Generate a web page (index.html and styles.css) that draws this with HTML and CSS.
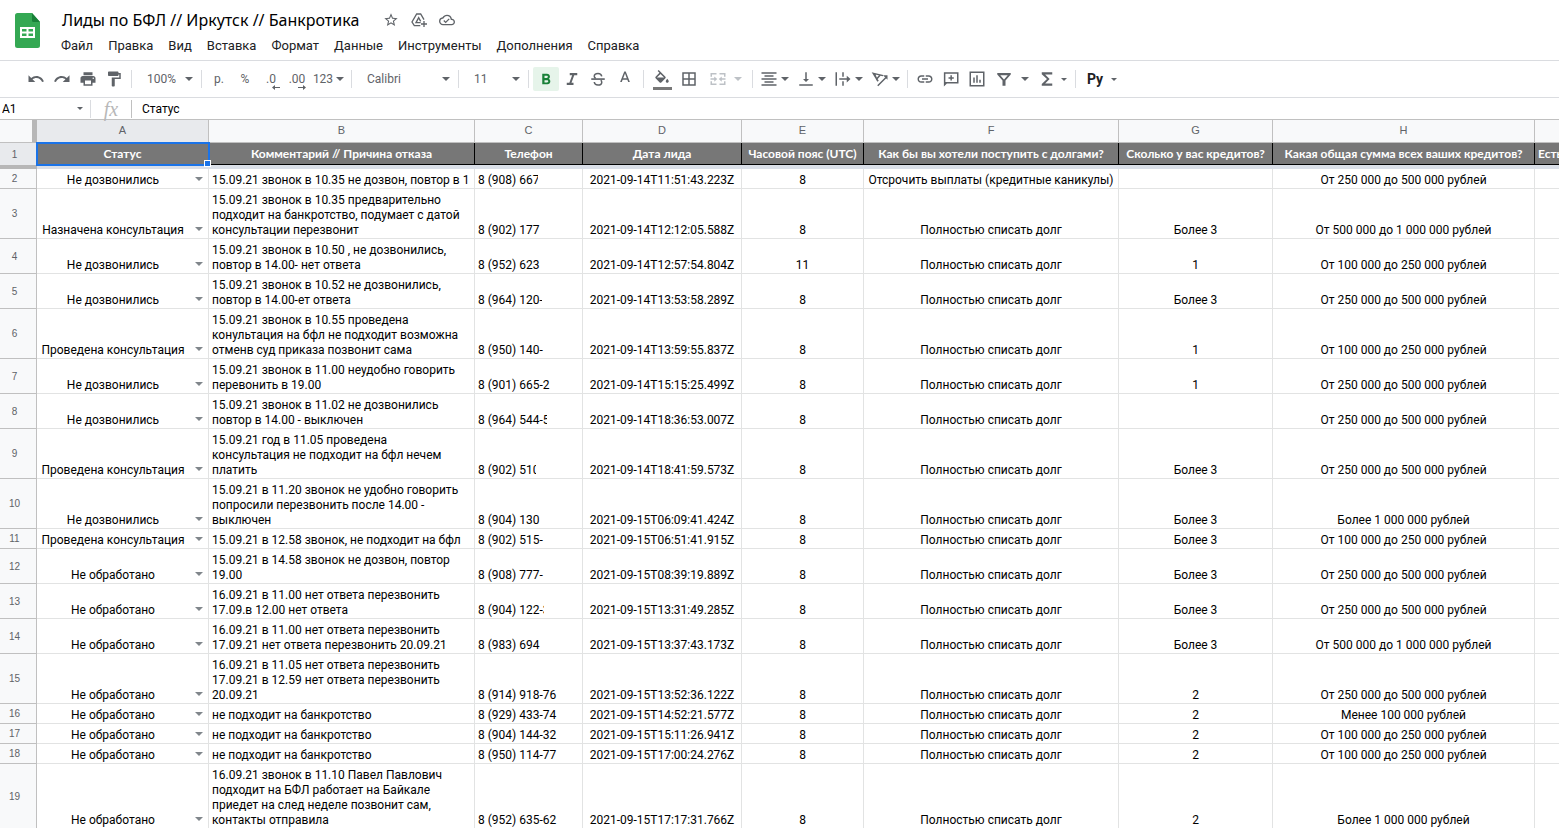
FILE: index.html
```html
<!doctype html>
<html lang="ru">

<head>
  <meta charset="utf-8">
  <title>Лиды по БФЛ // Иркутск // Банкротика</title>
  <link rel="stylesheet" href="styles.css">
</head>

<body>
  <header class="head">
    <svg class="logo" viewBox="0 0 25 35">
      <path fill="#34a853" d="M2.500 0H17l8 9v23.500a2.500 2.500 0 0 1-2.500 2.500h-20A2.500 2.500 0 0 1 0 32.500v-30A2.500 2.500 0 0 1 2.500 0z"/>
      <path fill="#188038" d="M17 0l8 9h-6.500A1.500 1.500 0 0 1 17 7.500z"/>
      <path fill="#fff" fill-rule="evenodd" d="M5 14h15v11H5zM7 16v2.500h4.500V16zm6.500 0v2.500H18V16zM7 20.500V23h4.500v-2.500zm6.500 0V23H18v-2.500z"/>
    </svg>
    <div class="headText">
      <div class="titleRow">
        <h1>Лиды по БФЛ // Иркутск // Банкротика</h1>
        <button class="titleBtn" aria-label="Пометить"><svg viewBox="0 0 24 24"><path d="M22 9.240l-7.190-.620L12 2 9.190 8.630 2 9.240l5.460 4.730L5.820 21 12 17.270 18.180 21l-1.630-7.030L22 9.240zM12 15.400l-3.760 2.270 1-4.280-3.320-2.880 4.380-.380L12 6.100l1.710 4.040 4.380.380-3.320 2.880 1 4.280L12 15.400z"/></svg></button>
        <button class="titleBtn" aria-label="Добавить на Диск"><svg viewBox="0 0 24 24"><path class="line" d="M14 20.500H5L1.500 15 8.500 3h6l5 8.500M14.500 16H7.500L11.500 8.500l3 5.500M19.500 13.500v9M15 18h9"/></svg></button>
        <button class="titleBtn" aria-label="Сохранено"><svg viewBox="0 0 24 24"><path d="M19.350 10.040A7.490 7.490 0 0 0 12 4C9.110 4 6.600 5.640 5.350 8.040A5.994 5.994 0 0 0 0 14c0 3.310 2.690 6 6 6h13c2.760 0 5-2.240 5-5 0-2.640-2.050-4.780-4.650-4.960zM19 18H6c-2.210 0-4-1.790-4-4 0-2.050 1.530-3.760 3.560-3.970l1.070-.110.500-.950A5.469 5.469 0 0 1 12 6c2.620 0 4.880 1.860 5.390 4.430l.300 1.500 1.530.110A2.980 2.980 0 0 1 22 15c0 1.650-1.350 3-3 3zm-9-3.820l-2.090-2.090L6.500 13.500 10 17l6.010-6.010-1.410-1.410z"/></svg></button>
      </div>
      <nav class="menu">
        <button>Файл</button>
        <button>Правка</button>
        <button>Вид</button>
        <button>Вставка</button>
        <button>Формат</button>
        <button>Данные</button>
        <button>Инструменты</button>
        <button>Дополнения</button>
        <button>Справка</button>
      </nav>
    </div>
  </header>

  <!-- TOOLBAR -->
  <div class="toolbar">
    <div class="group">
      <button aria-label="Отменить"><svg viewBox="0 0 24 24"><path d="M12.500 8c-2.650 0-5.050.990-6.900 2.600L2 7v9h9l-3.620-3.620c1.390-1.160 3.160-1.880 5.120-1.880 3.540 0 6.550 2.310 7.600 5.500l2.370-.780C21.080 11.030 17.150 8 12.500 8z"/></svg></button>
      <button aria-label="Повторить"><svg viewBox="0 0 24 24"><path d="M18.400 10.600C16.550 8.990 14.150 8 11.500 8c-4.650 0-8.580 3.030-9.960 7.220L3.900 16c1.050-3.190 4.050-5.500 7.600-5.500 1.950 0 3.730.720 5.120 1.880L13 16h9V7l-3.600 3.600z"/></svg></button>
      <button aria-label="Печать"><svg viewBox="0 0 24 24"><path d="M19 8H5c-1.660 0-3 1.340-3 3v6h4v4h12v-4h4v-6c0-1.660-1.340-3-3-3zm-3 11H8v-5h8v5zm3-7c-.550 0-1-.450-1-1s.450-1 1-1 1 .450 1 1-.450 1-1 1zm-1-9H6v4h12V3z"/></svg></button>
      <button aria-label="Копировать форматирование"><svg viewBox="0 0 24 24"><path d="M18 4V3c0-.550-.450-1-1-1H5c-.550 0-1 .450-1 1v4c0 .550.450 1 1 1h12c.550 0 1-.450 1-1V6h1v4H9v11c0 .550.450 1 1 1h2c.550 0 1-.450 1-1v-9h8V4h-3z"/></svg></button>
    </div>
    <div class="group">
      <label class="pick pickSmall arrow"><select aria-label="Масштаб"><option>100%</option></select></label>
    </div>
    <div class="group">
      <button>р.</button>
      <button>%</button>
      <button class="decimals" aria-label="Уменьшить число знаков">.0<svg viewBox="0 0 8 5"><path d="M0 2.500L3 0v2h5v1H3v2z"/></svg></button>
      <button class="decimals" aria-label="Увеличить число знаков">.00<svg viewBox="0 0 8 5"><path d="M8 2.500L5 0v2H0v1h5v2z"/></svg></button>
      <button class="formats arrow">123</button>
    </div>
    <div class="group">
      <label class="pick pickFont arrow"><select aria-label="Шрифт"><option>Calibri</option></select></label>
    </div>
    <div class="group">
      <label class="pick pickSmall arrow"><select aria-label="Размер шрифта"><option>11</option></select></label>
    </div>
    <div class="group">
      <button class="active" aria-label="Полужирный"><svg viewBox="0 0 24 24"><path d="M15.600 11.790c.970-.670 1.650-1.770 1.650-2.790 0-2.260-1.750-4-4-4H7v14h7.040c2.090 0 3.710-1.700 3.710-3.790 0-1.520-.860-2.820-2.150-3.420zM10 7.500h3c.830 0 1.500.670 1.500 1.500s-.670 1.500-1.500 1.500h-3v-3zm3.500 9H10v-3h3.500c.830 0 1.500.670 1.500 1.500s-.670 1.500-1.500 1.500z"/></svg></button>
      <button aria-label="Курсив"><svg viewBox="0 0 24 24"><path d="M9 4v3h3.200l-3.700 10H5v3h9v-3h-2.700L15 7h4V4z"/></svg></button>
      <button aria-label="Зачеркнутый"><svg viewBox="0 0 24 24"><path d="M3 11h18v2.200H3z"/><path class="line" d="M17 8.500C16.500 5.500 14.500 4.500 12 4.500c-3 0-5 1.400-5 3.700 0 1.300.600 2.200 2 2.900M7 16c.300 2.700 2.300 4 5 4 3.200 0 5-1.500 5-3.800 0-1.200-.400-2-1.300-2.700"/></svg></button>
      <button class="colorBtn" aria-label="Цвет текста"><svg viewBox="0 0 24 24"><path d="M11 2L5.500 16h2.250l1.120-3h6.250l1.120 3h2.250L13 2h-2zm-1.380 9L12 4.670 14.380 11H9.620z"/></svg></button>
    </div>
    <div class="group">
      <button class="colorBtn fillBtn" aria-label="Цвет заливки"><svg viewBox="0 0 24 24"><path d="M16.560 8.940L7.620 0 6.210 1.410l2.380 2.380-5.150 5.150c-.590.590-.590 1.540 0 2.120l5.500 5.500c.290.290.680.440 1.060.440s.770-.150 1.060-.440l5.500-5.500c.590-.580.590-1.530 0-2.120zM5.210 10L10 5.210 14.790 10H5.210zM19 11.500s-2 2.170-2 3.500c0 1.100.900 2 2 2s2-.900 2-2c0-1.330-2-3.500-2-3.500z"/></svg></button>
      <button aria-label="Границы"><svg viewBox="0 0 24 24"><path d="M3 3v18h18V3H3zm8 16H5v-6h6v6zm0-8H5V5h6v6zm8 8h-6v-6h6v6zm0-8h-6V5h6v6z"/></svg></button>
      <button class="merge arrow" disabled aria-label="Объединить ячейки"><svg viewBox="0 0 24 24"><path d="M2 4h8v2H4v3H2zM14 4h8v5h-2V6h-6zM2 15h2v3h6v2H2zM20 15h2v5h-8v-2h6zM2 11h5V8.500l4 3.500-4 3.500V13H2zM22 11h-5V8.500L13 12l4 3.500V13h5z"/></svg></button>
    </div>
    <div class="group groupTight">
      <button class="drop arrow" aria-label="Выравнивание по горизонтали"><svg viewBox="0 0 24 24"><path d="M2 3h20v2H2zM6 7h12v2H6zM2 11h20v2H2zM6 15h12v2H6zM2 19h20v2H2z"/></svg></button>
      <button class="drop arrow" aria-label="Выравнивание по вертикали"><svg viewBox="0 0 24 24"><path d="M16 12h-3V3h-2v9H8l4 4 4-4zM3 19v2h18v-2H3z"/></svg></button>
      <button class="drop arrow" aria-label="Перенос текста"><svg viewBox="0 0 24 24"><path d="M2 3h2v18H2zM11 3h2v6h-2zM11 15h2v6h-2zM7 11h10V7.500l5 4.500-5 4.500V13H7z"/></svg></button>
      <button class="drop arrow" aria-label="Поворот текста"><svg viewBox="0 0 24 24"><path class="line" d="M9.500 15L3 4.500l13 3M5 6l2.500 6L12 7M9 21L20 10"/><path d="M22 7v6l-6-6z"/></svg></button>
    </div>
    <div class="group">
      <button aria-label="Вставить ссылку"><svg viewBox="0 0 24 24"><path d="M3.900 12c0-1.710 1.390-3.100 3.100-3.100h4V7H7c-2.760 0-5 2.240-5 5s2.240 5 5 5h4v-1.900H7c-1.710 0-3.100-1.390-3.100-3.100zM8 13h8v-2H8v2zm9-6h-4v1.900h4c1.710 0 3.100 1.390 3.100 3.100s-1.390 3.100-3.100 3.100h-4V17h4c2.760 0 5-2.240 5-5s-2.240-5-5-5z"/></svg></button>
      <button aria-label="Вставить комментарий"><svg viewBox="0 0 24 24"><path d="M22 3H2.500v19l4-4H22zM20 16H4.500V5H20zM11.200 14h2v-2.500h2.500v-2h-2.500V7h-2v2.500H8.700v2h2.500z"/></svg></button>
      <button aria-label="Вставить диаграмму"><svg viewBox="0 0 24 24"><path d="M2 2v20h20V2zm18 18H4V4h16zM7 10h2v7H7zM11 7h2v10h-2zM15 13h2v4h-2z"/></svg></button>
      <button class="filter arrow" aria-label="Фильтр"><svg viewBox="0 0 24 24"><path fill-rule="evenodd" d="M3 4h18v2l-7 8v7h-4v-7L3 6zm4 3l5 5.500L17 7z"/></svg></button>
      <button class="sigma arrow arrowSmall" aria-label="Функции"><svg viewBox="0 0 24 24"><path d="M19 3H5v2.500l7 6.500-7 6.500V21h14v-3H9.500l6-6-6-6H19z"/></svg></button>
    </div>
    <div class="group groupLast">
      <button class="lang arrow arrowSmall">Ру</button>
    </div>
  </div>

  <!-- FORMULA BAR -->
  <div class="formulaBar">
    <label class="nameBox arrow arrowSmall"><input type="text" value="A1" aria-label="Поле имени"></label>
    <span class="fx">fx</span>
    <input class="formula" type="text" value="Статус" aria-label="Строка формул">
  </div>

  <!-- GRID -->
  <main class="sheet">
    <table>
      <colgroup>
        <col class="colNum"><col class="colA"><col class="colB"><col class="colC"><col class="colD">
        <col class="colE"><col class="colF"><col class="colG"><col class="colH"><col class="colI">
      </colgroup>
      <thead>
        <tr class="letters">
          <th class="corner"></th><th class="picked">A</th><th>B</th><th>C</th><th>D</th><th>E</th><th>F</th><th>G</th><th>H</th><th></th>
        </tr>
        <tr class="titles">
          <th class="num picked">1</th>
          <th class="selected">Статус</th>
          <th>Комментарий // Причина отказа</th>
          <th>Телефон</th>
          <th>Дата лида</th>
          <th>Часовой пояс (UTC)</th>
          <th>Как бы вы хотели поступить с долгами?</th>
          <th>Сколько у вас кредитов?</th>
          <th>Какая общая сумма всех ваших кредитов?</th>
          <th class="last">Есть</th>
        </tr>
        <tr class="freeze"><td class="freezeNum"></td><td colspan="9"></td></tr>
      </thead>
      <tbody id="rows"></tbody>
    </table>
  </main>

  <script src="script.js"></script>
</body>

</html>
```
FILE: styles.css
```css
body {
  margin: 0;
  overflow: hidden;
  background: #fff;
  color: #000;
  font-family: Roboto, "Liberation Sans", sans-serif;
}

button, input, select {
  font: inherit;
  color: inherit;
  background: none;
  border: 0;
  margin: 0;
  padding: 0;
  outline: 0;
  appearance: none;
}

svg {
  display: block;
  fill: #5f6368;
}

.line {
  fill: none;
  stroke: #5f6368;
  stroke-width: 2;
}

/* HEAD */
.head {
  display: flex;
  height: 60px;
  padding-left: 15px;
  border-bottom: 1px solid #dadce0;
}

.logo {
  width: 25px;
  height: 35px;
  margin-top: 13px;
}

.headText {
  padding: 8px 0 0 21px;
}

.titleRow {
  display: flex;
  align-items: center;
  height: 24px;
}

.titleRow h1 {
  margin: 0 24px 0 1px;
  font: 16px "Noto Sans", sans-serif;
  white-space: nowrap;
}

.titleBtn {
  margin-right: 12px;
}

.titleBtn svg {
  width: 16px;
  height: 16px;
}

.menu {
  display: flex;
  gap: 15px;
  height: 26px;
  font-size: 13px;
  color: #202124;
}

/* TOOLBAR */
.toolbar {
  display: flex;
  align-items: center;
  height: 36px;
  padding-left: 19px;
  border-bottom: 1px solid #dadce0;
  font-size: 12px;
  color: #5f6368;
}

.group {
  display: flex;
  align-items: center;
  height: 18px;
  padding: 0 4px;
  border-right: 1px solid #dadce0;
}

.groupTight {
  padding-right: 2px;
}

.groupLast {
  border-right: 0;
}

.group button {
  display: flex;
  align-items: center;
  justify-content: center;
  position: relative;
  width: 26px;
  height: 24px;
}

.group svg {
  width: 18px;
  height: 18px;
}

.group .active {
  background: #e6f4ea;
  border-radius: 2px;
}

.active svg {
  fill: #188038;
}

.group .colorBtn {
  width: 28px;
}

.fillBtn::after {
  content: "";
  position: absolute;
  left: 5px;
  right: 4px;
  bottom: 1px;
  height: 3px;
  background: #777;
}

.arrow {
  display: flex;
  align-items: center;
}

.arrow::after {
  content: "";
  flex: none;
  border: 4px solid transparent;
  border-top-color: #5f6368;
  border-bottom: 0;
}

.arrowSmall::after {
  border-width: 3px;
  border-bottom: 0;
}

.pick {
  box-sizing: border-box;
  padding: 0 4px 0 11px;
}

.pick select {
  flex: 1;
  min-width: 0;
}

.pickSmall {
  width: 61px;
}

.pickFont {
  width: 98px;
}

.group .decimals svg {
  position: absolute;
  right: 4px;
  bottom: 1px;
  width: 8px;
  height: 5px;
}

.group .formats {
  width: 37px;
  gap: 3px;
}

.group .merge {
  width: 46px;
  gap: 7px;
}

.merge svg {
  fill: #bdc1c6;
}

.merge::after {
  border-top-color: #bdc1c6;
}

.group .drop {
  width: 37px;
  gap: 3px;
  justify-content: flex-start;
  padding-left: 3px;
}

.group .filter {
  width: 43px;
  gap: 8px;
}

.group .sigma {
  width: 38px;
  gap: 5px;
}

.group .lang {
  width: 44px;
  gap: 8px;
  font-size: 14px;
  font-weight: bold;
  color: #202124;
}

/* FORMULA BAR */
.formulaBar {
  display: flex;
  align-items: center;
  height: 21px;
  border-bottom: 1px solid #c0c0c0;
  font-size: 12px;
}

.nameBox {
  box-sizing: border-box;
  width: 91px;
  height: 18px;
  padding: 0 7px 0 2px;
  border-right: 1px solid #dadce0;
}

.nameBox input {
  flex: 1;
  min-width: 0;
}

.fx {
  box-sizing: border-box;
  width: 41px;
  border-right: 1px solid #c0c0c0;
  color: #b8b8b8;
  font: italic 20px/18px "Liberation Serif", serif;
  text-align: center;
}

.formula {
  flex: 1;
  padding-left: 10px;
}

/* GRID */
.sheet {
  overflow: hidden;
}

table {
  width: 1690px;
  table-layout: fixed;
  border-collapse: separate;
  border-spacing: 0;
  font-size: 12px;
  line-height: 15px;
}

.colNum { width: 37px; }
.colA { width: 172px; }
.colB { width: 266px; }
.colC { width: 108px; }
.colD { width: 159px; }
.colE { width: 122px; }
.colF { width: 255px; }
.colG { width: 154px; }
.colH { width: 262px; }
.colI { width: 155px; }

.letters th {
  height: 20px;
  padding: 0 0 2px;
  border-right: 1px solid #c0c0c0;
  border-bottom: 1px solid #c0c0c0;
  background: #f8f9fa;
  color: #5f6368;
  font: 11px/15px "Liberation Sans", sans-serif;
}

.letters .picked, .titles .picked {
  background: #e8eaed;
}

.letters .corner {
  border-right: 5px solid #b7b7b7;
}

.num {
  padding: 0 7px 0 0;
  border-right: 1px solid #c0c0c0;
  border-bottom: 1px solid #c0c0c0;
  background: #f8f9fa;
  color: #5f6368;
  font: 10px/15px "Liberation Sans", sans-serif;
  text-align: center;
}

.titles th {
  height: 21px;
  padding: 0;
  border-bottom: 1px solid #000;
}

.titles th:not(.num) {
  border-right: 1px solid #000;
  background: #777;
  color: #fff;
  font: bold 12px/15px Lato, "Open Sans", sans-serif;
  white-space: nowrap;
}

.titles .num {
  padding-right: 7px;
  border-bottom: 0;
}

.titles .last {
  padding-left: 3px;
  text-align: left;
}

.titles .selected {
  position: relative;
  outline: 2px solid #1a73e8;
  outline-offset: -1px;
}

.selected::after {
  content: "";
  position: absolute;
  right: -3px;
  bottom: -3px;
  width: 5px;
  height: 5px;
  border: 1px solid #fff;
  background: #1a73e8;
}

.freeze td {
  height: 4px;
  padding: 0;
  background: #dadfe8;
}

.freeze .freezeNum {
  background: #b7b7b7;
}

tbody td {
  padding: 4px 3px 0;
  border-right: 1px solid #e2e3e3;
  border-bottom: 1px solid #e2e3e3;
  overflow: hidden;
  text-align: center;
  vertical-align: bottom;
  white-space: pre;
}

tbody .note, tbody .phone {
  text-align: left;
}

tbody .phone {
  position: relative;
}

/* part of the number is wiped out, gridline included */
.wipe {
  position: absolute;
  right: 6px;
  bottom: -1px;
  height: 17px;
  background: #fff;
}

.status .arrow {
  height: 15px;
  padding-right: 2px;
}

.status .arrow::after {
  margin-bottom: 4px;
  border-top-color: #80868b;
}

.status select {
  flex: 1;
  min-width: 0;
  height: 15px;
  padding-right: 9px;
  line-height: 15px;
  text-align: center;
  text-align-last: center;
}
```
FILE: script.js
```js
var NO = "Не дозвонились";
var DONE = "Проведена консультация";
var NEW = "Не обработано";
var OFF = "Полностью списать долг";
var R100 = "От 100 000 до 250 000 рублей";
var R250 = "От 250 000 до 500 000 рублей";
var R500 = "От 500 000 до 1 000 000 рублей";
var MORE = "Более 1 000 000 рублей";

// status, note, phone, width of the wiped part, date, zone, wish, credits, sum
var rows = [
  [NO, "15.09.21 звонок в 10.35 не дозвон, повтор в 1", "8 (908) 667", 38, "2021-09-14T11:51:43.223Z", "8", "Отсрочить выплаты (кредитные каникулы)", "", R250],
  ["Назначена консультация", "15.09.21 звонок в 10.35 предварительно\nподходит на банкротство, подумает с датой\nконсультации перезвонит", "8 (902) 177", 36, "2021-09-14T12:12:05.588Z", "8", OFF, "Более 3", R500],
  [NO, "15.09.21 звонок в 10.50 , не дозвонились,\nповтор в 14.00- нет ответа", "8 (952) 623", 0, "2021-09-14T12:57:54.804Z", "11", OFF, "1", R100],
  [NO, "15.09.21 звонок в 10.52 не дозвонились,\nповтор в 14.00-ет ответа", "8 (964) 120-", 34, "2021-09-14T13:53:58.289Z", "8", OFF, "Более 3", R250],
  [DONE, "15.09.21 звонок в 10.55 проведена\nконультация на бфл не подходит возможна\nотменв суд приказа позвонит сама", "8 (950) 140-", 0, "2021-09-14T13:59:55.837Z", "8", OFF, "1", R100],
  [NO, "15.09.21 звонок в 11.00 неудобно говорить\nперевонить в 19.00", "8 (901) 665-2", 0, "2021-09-14T15:15:25.499Z", "8", OFF, "1", R250],
  [NO, "15.09.21 звонок в 11.02 не дозвонились\nповтор в 14.00 - выключен", "8 (964) 544-5", 29, "2021-09-14T18:36:53.007Z", "8", OFF, "", R250],
  [DONE, "15.09.21 год в 11.05 проведена\nконсультация не подходит на бфл нечем\nплатить", "8 (902) 510", 40, "2021-09-14T18:41:59.573Z", "8", OFF, "Более 3", R250],
  [NO, "15.09.21 в 11.20 звонок не удобно говорить\nпопросили перезвонить после 14.00 -\nвыключен", "8 (904) 130", 36, "2021-09-15T06:09:41.424Z", "8", OFF, "Более 3", MORE],
  [DONE, "15.09.21 в 12.58 звонок, не подходит на бфл", "8 (902) 515-", 29, "2021-09-15T06:51:41.915Z", "8", OFF, "Более 3", R100],
  [NEW, "15.09.21 в 14.58 звонок не дозвон, повтор\n19.00", "8 (908) 777-", 32, "2021-09-15T08:39:19.889Z", "8", OFF, "Более 3", R250],
  [NEW, "16.09.21 в 11.00 нет ответа перезвонить\n17.09.в 12.00 нет ответа", "8 (904) 122-3", 32, "2021-09-15T13:31:49.285Z", "8", OFF, "Более 3", R250],
  [NEW, "16.09.21 в 11.00 нет ответа перезвонить\n17.09.21 нет ответа перезвонить 20.09.21", "8 (983) 694", 29, "2021-09-15T13:37:43.173Z", "8", OFF, "Более 3", R500],
  [NEW, "16.09.21 в 11.05 нет ответа перезвонить\n17.09.21 в 12.59 нет ответа перезвонить\n20.09.21", "8 (914) 918-76", 16, "2021-09-15T13:52:36.122Z", "8", OFF, "2", R250],
  [NEW, "не подходит на банкротство", "8 (929) 433-74", 10, "2021-09-15T14:52:21.577Z", "8", OFF, "2", "Менее 100 000 рублей"],
  [NEW, "не подходит на банкротство", "8 (904) 144-32", 0, "2021-09-15T15:11:26.941Z", "8", OFF, "2", R100],
  [NEW, "не подходит на банкротство", "8 (950) 114-77", 0, "2021-09-15T17:00:24.276Z", "8", OFF, "2", R100],
  [NEW, "16.09.21 звонок в 11.10 Павел Павлович\nподходит на БФЛ работает на Байкале\nприедет на след неделе позвонит сам,\nконтакты отправила", "8 (952) 635-62", 0, "2021-09-15T17:17:31.766Z", "8", OFF, "2", MORE]
];

var html = "";
rows.forEach(function (r, i) {
  var wipe = r[3] ? '<span class="wipe" style="width:' + r[3] + 'px"></span>' : "";
  html += '<tr><th class="num">' + (i + 2) + '</th>' +
    '<td class="status"><label class="arrow"><select aria-label="Статус"><option>' + r[0] + '</option></select></label></td>' +
    '<td class="note">' + r[1] + '</td>' +
    '<td class="phone">' + r[2] + wipe + '</td>';
  for (var c = 4; c < 9; c++) {
    html += '<td>' + r[c] + '</td>';
  }
  html += '<td></td></tr>';
});
document.getElementById("rows").innerHTML = html;
```
